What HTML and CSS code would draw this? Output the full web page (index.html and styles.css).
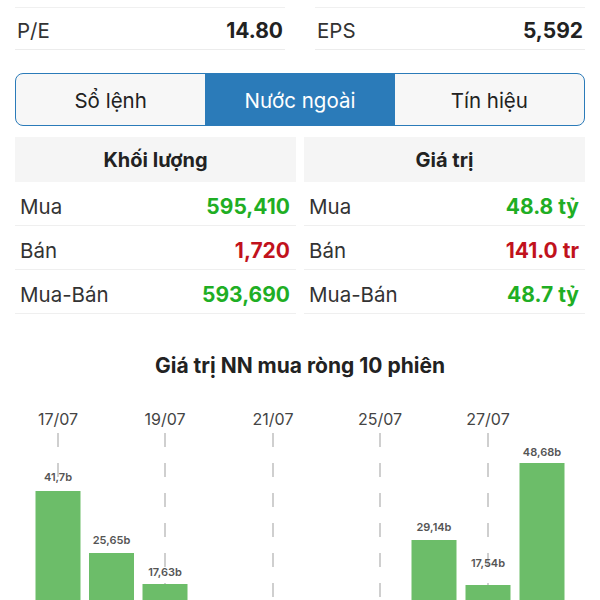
FILE: index.html
```html
<!DOCTYPE html>
<html lang="vi">
<head>
  <meta charset="UTF-8" />
  <meta name="viewport" content="width=device-width, initial-scale=1.0" />
  <title>Nước ngoài</title>
  <link rel="stylesheet" href="styles.css">
</head>
<body>
  <div class="screen">
    <!-- Chỉ số -->
    <div class="stats">
      <div class="stat"><span class="stat-label">P/E</span><span class="stat-value">14.80</span></div>
      <div class="stat"><span class="stat-label">EPS</span><span class="stat-value">5,592</span></div>
    </div>

    <!-- Tabs -->
    <div class="tabs">
      <div class="tab">Sổ lệnh</div>
      <div class="tab active">Nước ngoài</div>
      <div class="tab">Tín hiệu</div>
    </div>

    <!-- Bảng khối lượng / giá trị -->
    <div class="tables">
      <div class="table">
        <div class="table-head">Khối lượng</div>
        <div class="row"><span>Mua</span><span class="val up">595,410</span></div>
        <div class="row"><span>Bán</span><span class="val down">1,720</span></div>
        <div class="row"><span>Mua-Bán</span><span class="val up">593,690</span></div>
      </div>
      <div class="table">
        <div class="table-head">Giá trị</div>
        <div class="row"><span>Mua</span><span class="val up">48.8 tỷ</span></div>
        <div class="row"><span>Bán</span><span class="val down">141.0 tr</span></div>
        <div class="row"><span>Mua-Bán</span><span class="val up">48.7 tỷ</span></div>
      </div>
    </div>

    <!-- Biểu đồ -->
    <div class="chart-title">Giá trị NN mua ròng 10 phiên</div>
    <svg class="chart" width="600" height="205" viewBox="0 0 600 205">
      <g class="dates">
        <text x="58" y="30">17/07</text>
        <text x="165" y="30">19/07</text>
        <text x="273" y="30">21/07</text>
        <text x="380" y="30">25/07</text>
        <text x="488" y="30">27/07</text>
      </g>
      <g class="grid">
        <line x1="58" y1="38" x2="58" y2="205" />
        <line x1="165" y1="38" x2="165" y2="205" />
        <line x1="273" y1="38" x2="273" y2="205" />
        <line x1="380" y1="38" x2="380" y2="205" />
        <line x1="488" y1="38" x2="488" y2="205" />
      </g>
      <g class="bars">
        <rect x="35.5" y="96" width="45" height="120" />
        <rect x="89" y="158" width="45" height="60" />
        <rect x="142.5" y="189" width="45" height="30" />
        <rect x="411.5" y="145" width="45" height="70" />
        <rect x="465.5" y="190" width="45" height="30" />
        <rect x="519.5" y="68" width="45" height="150" />
      </g>
      <g class="bar-labels">
        <text x="58" y="86">41,7b</text>
        <text x="111.5" y="149">25,65b</text>
        <text x="165" y="181">17,63b</text>
        <text x="434" y="136">29,14b</text>
        <text x="488" y="172">17,54b</text>
        <text x="542" y="61">48,68b</text>
      </g>
    </svg>
  </div>
</body>
</html>
```

FILE: styles.css
```css
* { box-sizing: border-box; margin: 0; padding: 0; }
html, body { overflow: hidden; }
body {
  background: #fff;
  font-family: Inter, "Noto Sans", sans-serif;
  color: #222;
}
.screen {
  width: 600px;
  padding: 7px 15px 0;
}

/* —— Chỉ số —— */
.stats {
  display: flex; justify-content: space-between;
}
.stat {
  width: 270px; height: 43px;
  display: flex; justify-content: space-between; align-items: center;
  padding: 3px 2px 0;
  border-top: 1px solid #f0f0f0;
  border-bottom: 1px solid #ececec;
  font-size: 20.5px;
}
.stat-label { color: #333; }
.stat-value { font-weight: 700; font-size: 21px; color: #222; }

/* —— Tabs —— */
.tabs {
  margin-top: 23px;
  height: 53px;
  display: flex;
  border: 1.5px solid #2b7bb9;
  border-radius: 8px;
  overflow: hidden;
  background: #f7f7f7;
}
.tab {
  flex: 1;
  display: flex; align-items: center; justify-content: center;
  padding-top: 2px;
  font-size: 20.5px; color: #222;
}
.tab.active { background: #2b7bb9; color: #fff; }

/* —— Bảng —— */
.tables {
  margin-top: 11px;
  display: grid; grid-template-columns: 281px 281px; gap: 8px;
}
.table-head {
  height: 45px;
  display: flex; align-items: center; justify-content: center;
  background: #f5f5f5;
  font-size: 20px; font-weight: 700; color: #222;
}
.row {
  height: 44px;
  display: flex; justify-content: space-between; align-items: center;
  padding: 5px 6px 0 5px;
  border-bottom: 1px solid #efefef;
  font-size: 20.5px; color: #333;
}
.val { font-weight: 700; font-size: 21px; }
.up { color: #1fae24; }
.down { color: #c1121c; }

/* —— Biểu đồ —— */
.chart-title {
  margin-top: 40px;
  text-align: center;
  font-size: 21px; font-weight: 700; line-height: 24px;
  color: #222;
}
.chart {
  display: block;
  margin: 17px 0 0 -15px;
  overflow: hidden;
}
.dates text {
  font-family: Inter, sans-serif;
  font-size: 16px; fill: #444;
  text-anchor: middle;
}
.grid line {
  stroke: #c4c4c4; stroke-width: 1.6;
  stroke-dasharray: 14 16;
}
.bars rect { fill: #6cbd69; }
.bar-labels text {
  font-family: Inter, sans-serif;
  font-size: 11px; font-weight: 600; fill: #555;
  text-anchor: middle;
}
```
